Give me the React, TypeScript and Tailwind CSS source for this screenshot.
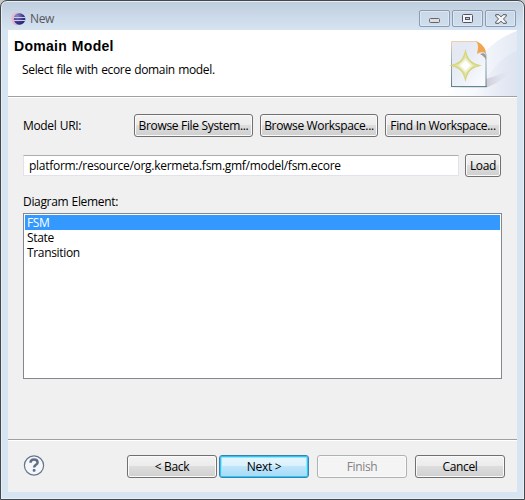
import type { ReactNode } from "react";

function WindowButton({ children, label }: { children: ReactNode; label: string }) {
  return (
    <button
      aria-label={label}
      className="flex h-[17px] w-[31px] items-center justify-center rounded-[2px] border border-[#8c9bb5] bg-gradient-to-b from-[#c9d7e6] to-[#cfdeed] shadow-[inset_0_0_0_1px_#dce7f2]"
    >
      {children}
    </button>
  );
}

const looks = {
  normal:
    "border-[#707070] bg-[linear-gradient(#f3f3f3_0%,#ebebeb_49%,#dddddd_50%,#cfcfcf_100%)] shadow-[inset_0_0_0_1px_#fafafa]",
  primary:
    "border-[#3c7fb1] bg-[linear-gradient(#e9f6fd_0%,#d9f0fc_49%,#bee6fd_50%,#a7d9f5_100%)] shadow-[inset_0_0_0_1px_#2cc8f5,inset_0_0_0_2px_#9be3fa]",
  disabled: "border-[#adb2b5] bg-[#f4f4f4] text-[#838383] shadow-[inset_0_0_0_1px_#fafafa]",
};

function Button({
  children,
  look = "normal",
  className = "",
}: {
  children: ReactNode;
  look?: keyof typeof looks;
  className?: string;
}) {
  return (
    <button
      className={`flex h-[23px] shrink-0 items-center justify-center whitespace-nowrap rounded-[3px] border pb-px ${looks[look]} ${className}`}
    >
      {children}
    </button>
  );
}

function EclipseLogo() {
  return (
    <svg width="15" height="14" viewBox="0 0 15 14" className="shrink-0">
      <defs>
        <linearGradient id="moon" x1="0" x2="1">
          <stop offset="0" stopColor="#f0bfd2" />
          <stop offset="1" stopColor="#b794bd" />
        </linearGradient>
        <radialGradient id="planet" cx=".3" cy=".25" r=".9">
          <stop offset="0" stopColor="#8a88c2" />
          <stop offset=".6" stopColor="#3a3388" />
          <stop offset="1" stopColor="#25206a" />
        </radialGradient>
      </defs>
      <circle cx="6.3" cy="7" r="6.2" fill="url(#moon)" />
      <circle cx="8.6" cy="7" r="5.800" fill="url(#planet)" />
      <path d="M2.500 5.500H14M2.500 8.500H14" stroke="#c9cdea" strokeWidth="1" />
    </svg>
  );
}

function WizardBanner() {
  return (
    <svg width="77" height="66" viewBox="440 30 77 66" className="shrink-0">
      <defs>
        <linearGradient id="arc" x1="0" x2="1" y1="0" y2="0">
          <stop offset="0" stopColor="#ffffff" />
          <stop offset=".5" stopColor="#f5f7fb" />
          <stop offset="1" stopColor="#e4e9f4" />
        </linearGradient>
        <linearGradient id="sheet" x1="0" x2="1" y1="0" y2="1">
          <stop offset="0" stopColor="#e9e9f0" />
          <stop offset=".3" stopColor="#e4e9f3" />
          <stop offset="1" stopColor="#fbfdff" />
        </linearGradient>
        <linearGradient id="edge" x1="0" x2="0" y1="0" y2="1">
          <stop offset="0" stopColor="#eccfb3" />
          <stop offset=".3" stopColor="#aab9c0" />
          <stop offset="1" stopColor="#5c7f83" />
        </linearGradient>
        <linearGradient id="band" x1="0" x2="1">
          <stop offset="0" stopColor="#dde2f0" stopOpacity="0" />
          <stop offset="1" stopColor="#dde2f0" stopOpacity=".7" />
        </linearGradient>
        <linearGradient id="shade" x1="0" x2="1">
          <stop offset="0" stopColor="#bcb5c5" />
          <stop offset="1" stopColor="#dfe3ef" stopOpacity="0" />
        </linearGradient>
        <linearGradient id="ground" x1="0" x2="1">
          <stop offset="0" stopColor="#c9cdda" stopOpacity="0" />
          <stop offset=".4" stopColor="#c9cdda" />
        </linearGradient>
      </defs>
      <path d="M517 31C505 35 494 42 486 51C472 67 458 84 444 96H517Z" fill="url(#arc)" />
      <path d="M517 51C502 56 495 68 486 78L474 96H517Z" fill="url(#band)" />
      <path d="M486 79C495 76 504 73 512 70C505 78 495 85 486 87Z" fill="url(#shade)" opacity=".65" />
      <path d="M446 87C455 84 479 84 490 86L486 88H446Z" fill="url(#ground)" opacity=".6" />
      <path d="M451.500 41.500H477L486 54V86.500H451.500Z" fill="url(#sheet)" stroke="url(#edge)" />
      <path d="M451 86.500H487" stroke="#60878a" />
      <path d="M480 54C484 52 487 54 486 60C485 57 483 56 480 54Z" fill="#969b9b" />
      <path d="M476 41C479 45 478 49 477 54C480 52 483 52 486 53C486 48 481 43 476 41Z" fill="#f0a551" />
      <path d="M465.500 49C468 60 471 63 482 65.500C471 68 468 71 465.500 82C463 71 460 68 449 65.500C460 63 463 60 465.500 49Z" fill="#d3d477" />
      <path d="M465.500 53C468 61 470 63.500 478 65.500C470 67.500 468 70 465.500 78C463 70 461 67.500 453 65.500C461 63.500 463 61 465.500 53Z" fill="#e0e1a2" />
      <path d="M465.500 58L473 65.500L465.500 73L458 65.500Z" fill="#f0f1d2" />
      <path d="M465.500 60.500L470.500 65.500L465.500 70.500L460.500 65.500Z" fill="#fff" />
    </svg>
  );
}

function HelpIcon() {
  return (
    <svg width="22" height="22" viewBox="0 0 22 22" className="shrink-0">
      <circle cx="11" cy="10.500" r="9.600" fill="#f5f7fa" stroke="#66758e" strokeWidth="1.200" />
      <path d="M7.500 7.700C7.500 5.200 9 4.400 11 4.400C13.200 4.400 14.600 5.500 14.600 7.400C14.600 9.800 11.100 9.900 11.100 12.500" fill="none" stroke="#5f6f8b" strokeWidth="2.500" />
      <rect x="9.700" y="14" width="2.800" height="2.700" rx="1" fill="#5f6f8b" />
    </svg>
  );
}

export default function App() {
  return (
    <div className="h-[500px] w-[525px] overflow-hidden bg-[#c8c8c8] font-['Open_Sans','Noto_Sans',sans-serif] text-[12px] leading-[15px] tracking-[-0.33px] [word-spacing:0.5px] text-black">
      <div className="flex h-full flex-col rounded-t-[7px] border border-[#46474b] bg-[linear-gradient(#becddd_0px,#d7e4f2_30px,#d7e4f2_100%)] px-[7px] pb-[7px] shadow-[inset_0_0_0_1px_#e6eef7]">
        <header className="flex h-[29px] shrink-0 items-center pl-[3px] pr-[1px]">
          <div className="mt-[6px] flex items-center">
            <EclipseLogo />
            <span className="ml-[4px] text-[#55585e]">New</span>
          </div>
          <div className="ml-auto mt-[6px] flex gap-[2px]">
            <WindowButton label="Minimize">
              <svg width="11" height="5" className="mt-[3px]">
                <rect x=".5" y=".5" width="10" height="4" rx="1" fill="#dedede" stroke="#64646c" />
              </svg>
            </WindowButton>
            <WindowButton label="Maximize">
              <svg width="11" height="9">
                <rect x=".5" y=".5" width="10" height="8" rx="1" fill="#f4f4f4" stroke="#52536b" />
                <rect x="3.500" y="3.500" width="4" height="2" fill="#bccbe0" stroke="#52536b" />
              </svg>
            </WindowButton>
            <WindowButton label="Close">
              <svg width="12" height="10" viewBox="0 0 12 10">
                <path d="M.7.700H4L6 2.900L8 .7H11.300V2L8.500 5L11.300 8V9.300H8L6 7.100L4 9.300H.7V8L3.500 5L.7 2Z" fill="#f4f4f4" stroke="#575863" />
              </svg>
            </WindowButton>
          </div>
        </header>

        <main className="flex min-h-0 flex-1 flex-col bg-[#f0f0f0]">
          <section className="flex h-[66px] shrink-0 justify-between bg-white">
            <div className="pl-[6px] pt-[9px]">
              <h1 className="whitespace-nowrap font-['Liberation_Sans',sans-serif] text-[14px] font-bold leading-[15px] tracking-[0.3px]">Domain Model</h1>
              <p className="ml-[8px] mt-[8px] whitespace-nowrap">Select file with ecore domain model.</p>
            </div>
            <WizardBanner />
          </section>
          <div className="h-[2px] shrink-0 border-b border-white bg-[#a0a0a0]" />

          <section className="flex flex-1 flex-col pl-[15px] pr-[15px] pt-[16px]">
            <div className="flex h-[23px] items-center pr-px">
              <span>Model URI:</span>
              <div className="ml-auto flex gap-[7px]">
                <Button className="w-[119px]">Browse File System...</Button>
                <Button className="w-[118px]">Browse Workspace...</Button>
                <Button className="w-[116px]">Find In Workspace...</Button>
              </div>
            </div>
            <div className="mt-[17px] flex items-center gap-[6px] pr-px">
              <div className="flex h-[21px] flex-1 items-center rounded-[1px] border border-[#e2e3ea] border-t-[#abadb3] bg-white pl-[5px] tracking-[-0.28px]">
                platform:/resource/org.kermeta.fsm.gmf/model/fsm.ecore
              </div>
              <Button className="w-[36px]">Load</Button>
            </div>
            <span className="mt-[17px]">Diagram Element:</span>
            <ul className="mt-[4px] h-[166px] shrink-0 border border-[#828790] bg-white p-px">
              <li className="h-[15px] bg-[#3399ff] pl-[2px] text-white">FSM</li>
              <li className="h-[15px] pl-[2px]">State</li>
              <li className="h-[15px] pl-[2px]">Transition</li>
            </ul>
          </section>

          <footer className="flex h-[53px] shrink-0 items-start border-t border-[#a0a0a0] pl-[15px] pr-[12px] pt-[15px] shadow-[inset_0_1px_0_#fff]">
            <HelpIcon />
            <div className="ml-auto flex">
              <Button className="w-[90px]">&lt; Back</Button>
              <Button look="primary" className="ml-[2px] w-[90px]">Next &gt;</Button>
              <Button look="disabled" className="ml-[8px] w-[90px]">Finish</Button>
              <Button className="ml-[8px] w-[90px]">Cancel</Button>
            </div>
          </footer>
        </main>
      </div>
    </div>
  );
}
